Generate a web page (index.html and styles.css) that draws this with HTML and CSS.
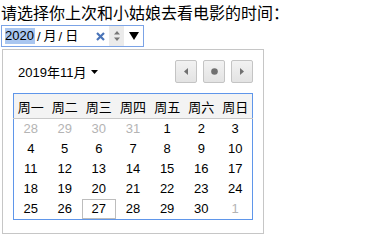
FILE: index.html
```html
<!DOCTYPE html>
<html lang="zh-CN">
<head>
    <meta charset="UTF-8">
    <title>日期选择</title>
    <link rel="stylesheet" href="styles.css">
</head>
<body>
    <div class="question">请选择你上次和小姑娘去看电影的时间：</div>

    <!-- Date field -->
    <div class="date-input">
        <span class="seg selected">2020</span>
        <span class="sep">/</span>
        <span class="seg">月</span>
        <span class="sep">/</span>
        <span class="seg">日</span>
        <span class="clear">
            <svg width="9" height="9" viewBox="0 0 9 9"><path d="M1 1 L8 8 M8 1 L1 8" stroke="#4a74b8" stroke-width="2.2"/></svg>
        </span>
        <span class="spin">
            <svg width="8" height="14" viewBox="0 0 8 14"><path d="M4 2 L7 5.5 L1 5.5 Z M1 8.5 L7 8.5 L4 12 Z" fill="#777"/></svg>
        </span>
        <span class="drop">
            <svg width="10" height="8" viewBox="0 0 10 8"><path d="M0 0 L10 0 L5 8 Z" fill="#000"/></svg>
        </span>
    </div>

    <!-- Calendar popup -->
    <div class="picker">
        <div class="picker-head">
            <div class="month">2019年11月 <svg width="7" height="4" viewBox="0 0 7 4"><path d="M0 0 L7 0 L3.5 4 Z" fill="#000"/></svg></div>
            <div class="nav">
                <button class="nav-btn"><svg width="4" height="7" viewBox="0 0 4 7"><path d="M4 0 L4 7 L0 3.5 Z" fill="#707070"/></svg></button>
                <button class="nav-btn"><svg width="7" height="7" viewBox="0 0 7 7"><circle cx="3.5" cy="3.5" r="3.3" fill="#707070"/></svg></button>
                <button class="nav-btn"><svg width="4" height="7" viewBox="0 0 4 7"><path d="M0 0 L0 7 L4 3.5 Z" fill="#707070"/></svg></button>
            </div>
        </div>

        <table class="cal">
            <thead>
                <tr><th>周一</th><th>周二</th><th>周三</th><th>周四</th><th>周五</th><th>周六</th><th>周日</th></tr>
            </thead>
            <tbody>
                <tr><td class="other">28</td><td class="other">29</td><td class="other">30</td><td class="other">31</td><td>1</td><td>2</td><td>3</td></tr>
                <tr><td>4</td><td>5</td><td>6</td><td>7</td><td>8</td><td>9</td><td>10</td></tr>
                <tr><td>11</td><td>12</td><td>13</td><td>14</td><td>15</td><td>16</td><td>17</td></tr>
                <tr><td>18</td><td>19</td><td>20</td><td>21</td><td>22</td><td>23</td><td>24</td></tr>
                <tr><td>25</td><td>26</td><td class="today">27</td><td>28</td><td>29</td><td>30</td><td class="other">1</td></tr>
            </tbody>
        </table>
    </div>
</body>
</html>
```

FILE: styles.css
```css
* {
    margin: 0;
    padding: 0;
    box-sizing: border-box;
}

body {
    font-family: "Liberation Sans", "Noto Sans CJK SC", sans-serif;
    background: #fff;
    color: #000;
}

.question {
    font-family: "Noto Sans CJK SC", sans-serif;
    font-size: 16px;
    line-height: 24px;
    padding-left: 1px;
    height: 25px;
}

/* Date field */
.date-input {
    display: flex;
    align-items: center;
    width: 143px;
    height: 22px;
    margin-left: 1px;
    border: 1px solid #7ba3e6;
    font-size: 13px;
    padding-left: 3px;
}

.seg {
    line-height: 16px;
}

.seg.selected {
    background: #a9c6f0;
    padding-right: 1px;
}

.sep {
    padding: 0 3px 0 2px;
}

.clear {
    display: flex;
    margin-left: 18px;
}

.spin {
    display: flex;
    align-items: center;
    justify-content: center;
    width: 15px;
    height: 20px;
    background: #ebebeb;
    margin-left: 4px;
}

.drop {
    display: flex;
    margin-left: 5px;
}

/* Calendar popup */
.picker {
    width: 262px;
    height: 185px;
    margin: 2px 0 0 2px;
    border: 1px solid #c6c6c6;
    background: #fff;
    padding: 10px;
}

.picker-head {
    display: flex;
    justify-content: space-between;
    align-items: center;
    height: 23px;
    margin-bottom: 10px;
}

.month {
    font-size: 13px;
    padding-left: 5px;
    display: flex;
    align-items: center;
    gap: 5px;
}

.nav {
    display: flex;
    gap: 6px;
}

.nav-btn {
    display: flex;
    align-items: center;
    justify-content: center;
    width: 22px;
    height: 23px;
    border: 1px solid #c4c4c4;
    border-radius: 2px;
    background: linear-gradient(#f2f2f2, #e3e3e3);
}

.cal {
    width: 240px;
    border-collapse: collapse;
    border: 1px solid #5f96ea;
    font-size: 13px;
    table-layout: fixed;
}

.cal th {
    font-weight: normal;
    height: 25px;
    background: #f3f3f3;
    border-bottom: 1px solid #c8c8c8;
    font-family: "Noto Sans CJK SC", sans-serif;
    text-align: center;
}

.cal td {
    height: 20px;
    text-align: center;
    line-height: 20px;
}

.cal td.other {
    color: #b4b4b4;
}

.cal td.today {
    box-shadow: inset 0 0 0 1px #bdbdbd;
}
```
